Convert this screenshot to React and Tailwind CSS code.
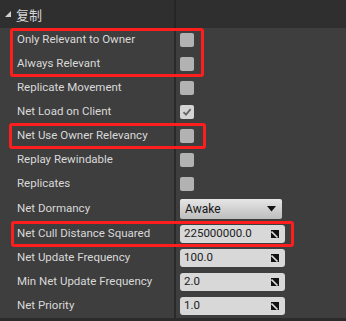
import React from 'react';

const rows = [
    { label: 'Only Relevant to Owner', type: 'check' },
    { label: 'Always Relevant', type: 'check' },
    { label: 'Replicate Movement', type: 'check' },
    { label: 'Net Load on Client', type: 'check', checked: true },
    { label: 'Net Use Owner Relevancy', type: 'check' },
    { label: 'Replay Rewindable', type: 'check' },
    { label: 'Replicates', type: 'check' },
    { label: 'Net Dormancy', type: 'select', value: 'Awake' },
    { label: 'Net Cull Distance Squared', type: 'number', value: '225000000.0' },
    { label: 'Net Update Frequency', type: 'number', value: '100.0' },
    { label: 'Min Net Update Frequency', type: 'number', value: '2.0' },
    { label: 'Net Priority', type: 'number', value: '1.0' },
];

const Checkbox = ( { checked } ) => (
    <div className={`w-[14px] h-[14px] rounded-[2px] flex items-center justify-center ${checked ? 'bg-[#d4d4d4]' : 'bg-[#b2b2b2]'}`}>
        {checked && (
            <svg width="10" height="10" viewBox="0 0 10 10">
                <path d="M1.5 5.2 L4 7.6 L8.6 2.2" fill="none" stroke="#666666" strokeWidth="1.8" />
            </svg>
        )}
    </div>
);

const DragIcon = () => (
    <svg width="8" height="8" viewBox="0 0 8 8">
        <rect x="0" y="0" width="8" height="8" fill="#111111" />
        <path d="M0.5 1.5 L6.5 7.5" stroke="#dcdcdc" strokeWidth="1.6" />
    </svg>
);

const Value = ( { row } ) => {
    if ( row.type === 'check' ) return <Checkbox checked={row.checked} />;
    if ( row.type === 'select' ) {
        return (
            <div className="w-[102px] h-[20px] rounded-[2px] bg-gradient-to-b from-[#e6e6e6] to-[#bdbdbd] flex items-center justify-between pl-[5px] pr-[6px] text-[#161616] text-[12px]">
                <span>{row.value}</span>
                <svg width="9" height="6" viewBox="0 0 9 6"><path d="M0 0 H9 L4.5 5.5 Z" fill="#141414" /></svg>
            </div>
        );
    }
    return (
        <div className="w-[105px] h-[18px] rounded-[3px] bg-[#d8d8d8] flex items-center justify-between pl-[4px] pr-[6px] text-[#1b1b1b]">
            <span>{row.value}</span>
            <DragIcon />
        </div>
    );
};

const App = () => {
    return (
        <div className="relative w-[346px] h-[321px] bg-[#2b2b2b] overflow-hidden text-[11.5px] leading-none" style={{ fontFamily: 'Roboto, "Noto Sans", sans-serif' }}>
            {/* Header */}
            <div className="h-[28px] bg-[#2f2f2f] flex">
                <div className="w-[174px] flex items-center pl-[5px] gap-[5px]">
                    <svg width="6" height="6" viewBox="0 0 6 6"><path d="M0 6 H6 V0 Z" fill="#cfcfcf" /></svg>
                    <span className="text-[13px] text-[#d6d6d6]" style={{ fontFamily: '"Noto Sans CJK SC", sans-serif' }}>复制</span>
                </div>
                <div className="w-[2px] bg-[#252525]"></div>
                <div className="flex-1"></div>
            </div>

            {/* Rows */}
            <div className="bg-[#3e3e3e]">
                {rows.map( ( row ) => (
                    <div key={row.label} className={`flex ${row.type === 'select' ? 'h-[26px]' : 'h-[24px]'}`}>
                        <div className="w-[174px] flex items-center pl-[17px] text-[#d9d9d9]">
                            {row.label}
                        </div>
                        <div className="w-[2px] bg-[#2a2a2a]"></div>
                        <div className="flex-1 flex items-center pl-[4px]">
                            <Value row={row} />
                        </div>
                    </div>
                ) )}
            </div>

            {/* Annotation boxes */}
            <div className="absolute left-[10px] top-[28px] w-[194px] h-[49px] border-[3px] border-[#ff1e1e] rounded-[3px]"></div>
            <div className="absolute left-[9px] top-[123px] w-[197px] h-[26px] border-[3px] border-[#ff1e1e] rounded-[3px]"></div>
            <div className="absolute left-[11px] top-[221px] w-[283px] h-[26px] border-[3px] border-[#ff1e1e] rounded-[3px]"></div>
        </div>
    );
};

export default App;
